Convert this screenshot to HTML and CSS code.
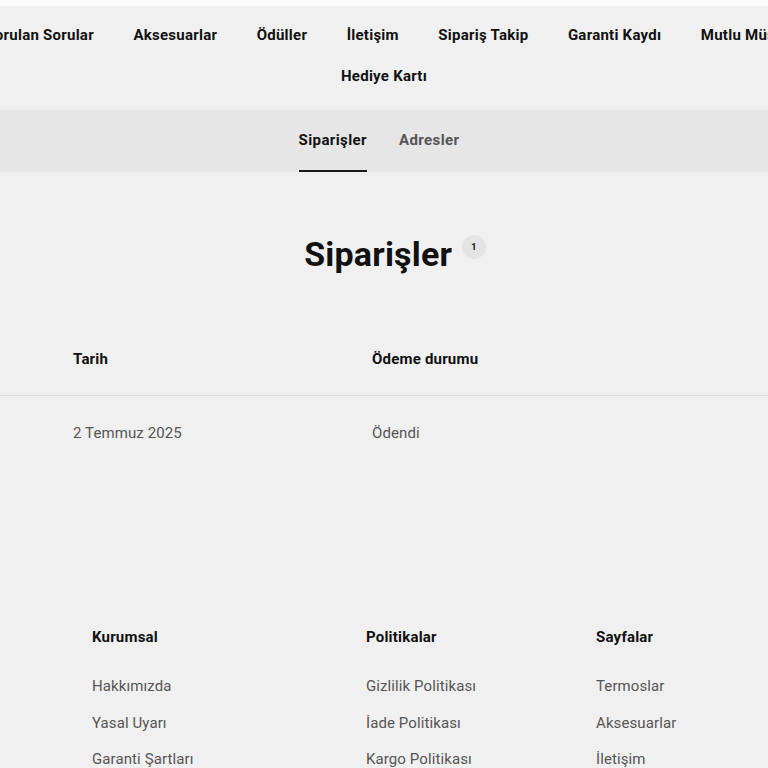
FILE: index.html
```html
<!DOCTYPE html>
<html lang="tr">
<head>
<meta charset="utf-8">
<title>Siparişler</title>
<link rel="stylesheet" href="styles.css">
</head>
<body>
<div class="top-strip"></div>
<header class="site-header">
  <nav class="main-nav">
    <ul class="nav-row">
      <li><a href="#">Sıkça Sorulan Sorular</a></li>
      <li><a href="#">Aksesuarlar</a></li>
      <li><a href="#">Ödüller</a></li>
      <li><a href="#">İletişim</a></li>
      <li><a href="#">Sipariş Takip</a></li>
      <li><a href="#">Garanti Kaydı</a></li>
      <li><a href="#">Mutlu Müşteriler</a></li>
    </ul>
    <ul class="nav-row nav-row-second">
      <li><a href="#">Hediye Kartı</a></li>
    </ul>
  </nav>
</header>
<div class="tabs">
  <a href="#" class="tab active">Siparişler</a>
  <a href="#" class="tab">Adresler</a>
</div>
<main class="content">
  <h1 class="page-title">Siparişler <span class="badge">1</span></h1>
  <div class="orders">
    <div class="orders-row orders-head">
      <div class="cell">Tarih</div>
      <div class="cell">Ödeme durumu</div>
    </div>
    <div class="orders-row orders-body">
      <div class="cell">2 Temmuz 2025</div>
      <div class="cell">Ödendi</div>
    </div>
  </div>
</main>
<footer class="site-footer">
  <div class="footer-col">
    <h3>Kurumsal</h3>
    <a href="#">Hakkımızda</a>
    <a href="#">Yasal Uyarı</a>
    <a href="#">Garanti Şartları</a>
  </div>
  <div class="footer-col">
    <h3>Politikalar</h3>
    <a href="#">Gizlilik Politikası</a>
    <a href="#">İade Politikası</a>
    <a href="#">Kargo Politikası</a>
  </div>
  <div class="footer-col">
    <h3>Sayfalar</h3>
    <a href="#">Termoslar</a>
    <a href="#">Aksesuarlar</a>
    <a href="#">İletişim</a>
  </div>
</footer>
</body>
</html>
```
FILE: styles.css
```css
html, body {
  margin: 0;
  padding: 0;
}
body {
  background: #f0f0f0;
  font-family: Roboto, "Liberation Sans", sans-serif;
  color: #1a1a1a;
  overflow-x: hidden;
  width: 768px;
}
a {
  color: inherit;
  text-decoration: none;
}
.top-strip {
  height: 6px;
  background: #fbfbfb;
}
.site-header {
  padding: 8px 0 14px;
}
.nav-row {
  list-style: none;
  margin: 0;
  padding: 0 8px 0 0;
  display: flex;
  justify-content: center;
  gap: 39.5px;
  white-space: nowrap;
  height: 41px;
  align-items: center;
  font-weight: 700;
  font-size: 15px;
  letter-spacing: 0.25px;
  color: #111;
}
.nav-row-second {
  padding: 0;
}
.nav-row li {
  flex: none;
}
.tabs {
  background: #e6e6e6;
  height: 62px;
  display: flex;
  justify-content: center;
  gap: 32px;
  padding-right: 10px;
}
.tab {
  display: flex;
  align-items: center;
  font-weight: 700;
  font-size: 15px;
  letter-spacing: 0.4px;
  color: #555;
  border-bottom: 2px solid transparent;
  height: 60px;
}
.tab.active {
  color: #111;
  border-bottom-color: #1a1a1a;
}
.content {
  padding-top: 58px;
}
.page-title {
  margin: 0;
  padding-left: 22px;
  text-align: center;
  font-size: 34px;
  font-weight: 700;
  color: #111;
  line-height: 48px;
  letter-spacing: 0.2px;
}
.badge {
  display: inline-flex;
  width: 24px;
  height: 24px;
  border-radius: 50%;
  background: #e4e4e4;
  font-size: 9px;
  letter-spacing: 0;
  align-items: center;
  justify-content: center;
  vertical-align: 16px;
  margin-left: 1px;
}
.orders {
  margin-top: 45px;
}
.orders-row {
  display: grid;
  grid-template-columns: 299px 1fr;
  padding-left: 73px;
  font-size: 15px;
}
.orders-head {
  font-weight: 700;
  color: #111;
  height: 72px;
  align-items: center;
  border-bottom: 1px solid #dcdcdc;
  letter-spacing: 0.2px;
}
.orders-body {
  color: #555;
  height: 73px;
  align-items: center;
  letter-spacing: 0.1px;
}
.site-footer {
  margin-top: 160px;
  display: grid;
  grid-template-columns: 274px 230px 1fr;
  padding-left: 92px;
}
.footer-col {
  display: flex;
  flex-direction: column;
}
.footer-col h3 {
  margin: 0 0 32px;
  font-size: 15px;
  font-weight: 700;
  color: #111;
  line-height: 17px;
  letter-spacing: 0.2px;
}
.footer-col a {
  font-size: 15px;
  color: #555;
  line-height: 17px;
  margin-bottom: 19.5px;
  letter-spacing: 0.1px;
}
```
